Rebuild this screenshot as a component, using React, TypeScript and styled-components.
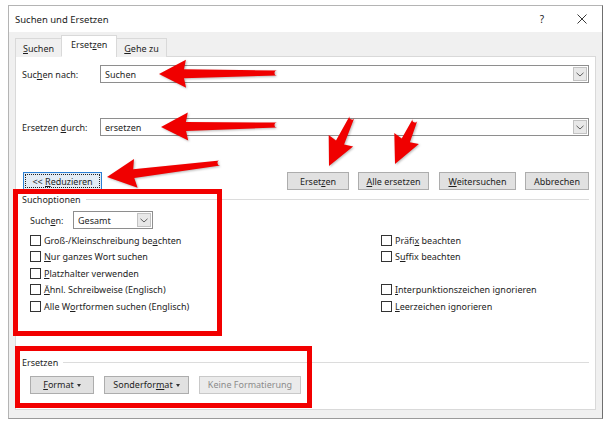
import React from "react";
import styled, { createGlobalStyle, css } from "styled-components";

const Global = createGlobalStyle`
  html, body { margin: 0; padding: 0; background: #ffffff; }
  body { font-family: "Noto Sans", "DejaVu Sans", sans-serif; font-size: 9px; color: #1e1e1e; }
  * { box-sizing: border-box; }
`;

const Page = styled.div`
  position: relative;
  width: 609px;
  height: 424px;
  padding: 5px 0 0 8px;
  overflow: hidden;
`;

const Dialog = styled.div`
  width: 595px;
  height: 414px;
  border: 1px solid #b4b4b4;
  border-right: 1px solid #6f6f6f;
  border-bottom: 1px solid #9a9a9a;
  display: flex;
  flex-direction: column;
  background: #f0f0f0;
`;

const TitleBar = styled.div`
  height: 26px;
  background: #ffffff;
  display: flex;
  align-items: center;
  padding-left: 6px;
`;

const Title = styled.div`
  flex: 1;
  font-size: 9.5px;
  color: #1a1a1a;
  padding-top: 1px;
`;

const TitleButtons = styled.div`
  display: flex;
  align-items: center;
  height: 100%;
`;

const TitleButton = styled.div`
  width: 40px;
  height: 100%;
  display: flex;
  align-items: center;
  justify-content: center;
  font-size: 10px;
  color: #222;
`;

const Body = styled.div`
  flex: 1;
  display: flex;
  flex-direction: column;
  padding: 4px 6px 8px 6px;
`;

const TabStrip = styled.div`
  display: flex;
  align-items: flex-end;
  height: 21px;
  position: relative;
  z-index: 1;
  margin-bottom: -1px;
`;

const Tab = styled.div<{ $active?: boolean }>`
  height: 19px;
  padding: 0 7px;
  display: flex;
  align-items: center;
  border: 1px solid #d9d9d9;
  border-bottom: none;
  background: #f0f0f0;
  margin-left: -1px;
  &:first-child { margin-left: 0; }
  ${(p) =>
    p.$active &&
    css`
      height: 22px;
      background: #ffffff;
      padding: 0 9px 3px;
      border-bottom: 1px solid #ffffff;
    `}
`;

const Panel = styled.div`
  flex: 1;
  background: #ffffff;
  border: 1px solid #d9d9d9;
  padding: 8px 6px 12px 6px;
  display: flex;
  flex-direction: column;
`;

const FieldRow = styled.div<{ $top?: number }>`
  display: flex;
  align-items: center;
  height: 18px;
  margin-top: ${(p) => p.$top ?? 0}px;
`;

const FieldLabel = styled.div`
  width: 78px;
  flex: none;
`;

const Combo = styled.div<{ $width?: number }>`
  ${(p) => (p.$width ? `width: ${p.$width}px; flex: none;` : "flex: 1;")}
  height: 18px;
  border: 1px solid #8e8e8e;
  background: #fff;
  display: flex;
  align-items: center;
  padding: 1px 1px 1px 4px;
`;

const ComboText = styled.div`
  flex: 1;
`;

const DropBox = styled.div`
  width: 14px;
  height: 100%;
  background: #e8e8e8;
  border: 1px solid #c2c2c2;
  display: flex;
  align-items: center;
  justify-content: center;
`;

const ButtonRow = styled.div`
  display: flex;
  align-items: center;
  margin-top: 36px;
  padding-left: 1px;
`;

const Spacer = styled.div`
  flex: 1;
`;

const Button = styled.div<{ $w: number; $gap?: number; $disabled?: boolean }>`
  width: ${(p) => p.$w}px;
  height: 18px;
  margin-left: ${(p) => p.$gap ?? 0}px;
  background: #e1e1e1;
  border: 1px solid #adadad;
  display: flex;
  align-items: center;
  justify-content: center;
  gap: 3px;
  flex: none;
  ${(p) =>
    p.$disabled &&
    css`
      background: #ebebeb;
      border-color: #c9c9c9;
      color: #8c8c8c;
    `}
`;

const FocusButton = styled(Button)`
  border-color: #2b7fd4;
  background: #e3ecf5;
  position: relative;
  &::after {
    content: "";
    position: absolute;
    inset: 1px;
    border: 1px dotted #222;
  }
`;

const Caret = styled.span`
  width: 0;
  height: 0;
  border-left: 2.5px solid transparent;
  border-right: 2.5px solid transparent;
  border-top: 3px solid #333;
  margin-top: 1px;
`;

const GroupHeader = styled.div<{ $top: number }>`
  display: flex;
  align-items: center;
  height: 12px;
  margin-top: ${(p) => p.$top}px;
  gap: 5px;
`;

const Rule = styled.div`
  flex: 1;
  height: 1px;
  background: #dcdcdc;
`;

const OptionsGrid = styled.div`
  display: grid;
  grid-template-columns: 351px 1fr;
  grid-template-rows: 18px repeat(5, 16.5px);
  margin-top: 6px;
  padding-left: 8px;
`;

const SelectRow = styled.div`
  display: flex;
  align-items: center;
  grid-column: 1;
  grid-row: 1;
`;

const SelectLabel = styled.div`
  width: 43px;
`;

const CheckRow = styled.div<{ $col: number; $row: number }>`
  grid-column: ${(p) => p.$col};
  grid-row: ${(p) => p.$row};
  display: flex;
  align-items: center;
  gap: 3px;
  transform: translateY(3px);
`;

const Box = styled.span`
  width: 11px;
  height: 11px;
  border: 1px solid #333;
  background: #fff;
  flex: none;
`;

const FormatRow = styled.div`
  display: flex;
  align-items: center;
  margin-top: 7px;
  padding-left: 8px;
`;

const Overlay = styled.svg`
  position: absolute;
  left: 0;
  top: 0;
  pointer-events: none;
  filter: drop-shadow(1px 1.5px 1px rgba(0, 0, 0, 0.28));
`;

const RedFrame = styled.div<{ $x: number; $y: number; $w: number; $h: number }>`
  position: absolute;
  left: ${(p) => p.$x}px;
  top: ${(p) => p.$y}px;
  width: ${(p) => p.$w}px;
  height: ${(p) => p.$h}px;
  border: 5px solid #f20000;
  pointer-events: none;
`;

const U = styled.span`
  text-decoration: underline;
  text-underline-offset: 1px;
`;

const Chevron = () => (
  <svg width="8" height="5" viewBox="0 0 8 5">
    <path d="M0.5 0.8 L4 4 L7.5 0.8" fill="none" stroke="#606060" strokeWidth="1" />
  </svg>
);

type Pt = [number, number];
function arrowPath(tail: Pt, tip: Pt, hl: number, hw: number, tw: number, bw: number) {
  const dx = tip[0] - tail[0];
  const dy = tip[1] - tail[1];
  const len = Math.hypot(dx, dy);
  const ux = dx / len;
  const uy = dy / len;
  const nx = -uy;
  const ny = ux;
  const bx = tip[0] - ux * hl;
  const by = tip[1] - uy * hl;
  const p = (x: number, y: number) => `${x.toFixed(1)},${y.toFixed(1)}`;
  return [
    "M",
    p(tail[0] + nx * tw / 2, tail[1] + ny * tw / 2),
    "L",
    p(bx + nx * bw / 2 + ux * 2, by + ny * bw / 2 + uy * 2),
    "L",
    p(bx + nx * hw / 2, by + ny * hw / 2),
    "L",
    p(tip[0], tip[1]),
    "L",
    p(bx - nx * hw / 2, by - ny * hw / 2),
    "L",
    p(bx - nx * bw / 2 + ux * 2, by - ny * bw / 2 + uy * 2),
    "L",
    p(tail[0] - nx * tw / 2, tail[1] - ny * tw / 2),
    "A",
    `${tw / 2} ${tw / 2} 0 0 1`,
    p(tail[0] + nx * tw / 2, tail[1] + ny * tw / 2),
    "Z",
  ].join(" ");
}

const arrows: { tail: Pt; tip: Pt; hl: number; hw: number }[] = [
  { tail: [277, 73], tip: [159, 74], hl: 27, hw: 28 },
  { tail: [277, 125], tip: [161, 127], hl: 27, hw: 28 },
  { tail: [220, 163], tip: [107, 177], hl: 29, hw: 29 },
  { tail: [352, 117], tip: [329, 166], hl: 28, hw: 27 },
  { tail: [415, 120], tip: [395, 164], hl: 28, hw: 27 },
];

export default function App() {
  return (
    <>
      <Global />
      <Page>
        <Dialog>
          <TitleBar>
            <Title>Suchen und Ersetzen</Title>
            <TitleButtons>
              <TitleButton>?</TitleButton>
              <TitleButton>
                <svg width="10" height="10" viewBox="0 0 10 10">
                  <path d="M0.5 0.5 L9.5 9.5 M9.5 0.5 L0.5 9.5" stroke="#222" strokeWidth="0.9" />
                </svg>
              </TitleButton>
            </TitleButtons>
          </TitleBar>
          <Body>
            <TabStrip>
              <Tab><span><U>S</U>uchen</span></Tab>
              <Tab $active><span>Erset<U>z</U>en</span></Tab>
              <Tab><span><U>G</U>ehe zu</span></Tab>
            </TabStrip>
            <Panel>
              <FieldRow>
                <FieldLabel>Suc<U>h</U>en nach:</FieldLabel>
                <Combo>
                  <ComboText>Suchen</ComboText>
                  <DropBox><Chevron /></DropBox>
                </Combo>
              </FieldRow>
              <FieldRow $top={35}>
                <FieldLabel>Ersetzen <U>d</U>urch:</FieldLabel>
                <Combo>
                  <ComboText>ersetzen</ComboText>
                  <DropBox><Chevron /></DropBox>
                </Combo>
              </FieldRow>
              <ButtonRow>
                <FocusButton $w={79}><span>&lt;&lt; <U>R</U>eduzieren</span></FocusButton>
                <Spacer />
                <Button $w={62}><span>Erset<U>z</U>en</span></Button>
                <Button $w={71} $gap={9}><span><U>A</U>lle ersetzen</span></Button>
                <Button $w={77} $gap={10}><span><U>W</U>eitersuchen</span></Button>
                <Button $w={64} $gap={9}><span>Abbrechen</span></Button>
              </ButtonRow>
              <GroupHeader $top={3}>
                <span>Suchoptionen</span>
                <Rule />
              </GroupHeader>
              <OptionsGrid>
                <SelectRow>
                  <SelectLabel>Such<U>e</U>n:</SelectLabel>
                  <Combo $width={80}>
                    <ComboText>Gesamt</ComboText>
                    <DropBox><Chevron /></DropBox>
                  </Combo>
                </SelectRow>
                <CheckRow $col={1} $row={2}><Box /><span>Groß-/Kleinschreibung be<U>a</U>chten</span></CheckRow>
                <CheckRow $col={1} $row={3}><Box /><span><U>N</U>ur ganzes Wort suchen</span></CheckRow>
                <CheckRow $col={1} $row={4}><Box /><span><U>P</U>latzhalter verwenden</span></CheckRow>
                <CheckRow $col={1} $row={5}><Box /><span><U>Ä</U>hnl. Schreibweise (Englisch)</span></CheckRow>
                <CheckRow $col={1} $row={6}><Box /><span>Alle W<U>o</U>rtformen suchen (Englisch)</span></CheckRow>
                <CheckRow $col={2} $row={2}><Box /><span>Präfi<U>x</U> beachten</span></CheckRow>
                <CheckRow $col={2} $row={3}><Box /><span>S<U>u</U>ffix beachten</span></CheckRow>
                <CheckRow $col={2} $row={5}><Box /><span><U>I</U>nterpunktionszeichen ignorieren</span></CheckRow>
                <CheckRow $col={2} $row={6}><Box /><span><U>L</U>eerzeichen ignorieren</span></CheckRow>
              </OptionsGrid>
              <GroupHeader $top={45}>
                <span>Ersetzen</span>
                <Rule />
              </GroupHeader>
              <FormatRow>
                <Button $w={64}><span><U>F</U>ormat</span><Caret /></Button>
                <Button $w={85} $gap={10}><span>Sonderfor<U>m</U>at</span><Caret /></Button>
                <Button $w={102} $gap={10} $disabled><span>Keine Formatierung</span></Button>
              </FormatRow>
            </Panel>
          </Body>
        </Dialog>
        <RedFrame $x={13} $y={189} $w={209} $h={147} />
        <RedFrame $x={15} $y={346} $w={297} $h={62} />
        <Overlay width="609" height="424" viewBox="0 0 609 424">
          {arrows.map((a, i) => (
            <path key={i} d={arrowPath(a.tail, a.tip, a.hl, a.hw, 5, 9)} fill="#f00000" />
          ))}
        </Overlay>
      </Page>
    </>
  );
}
